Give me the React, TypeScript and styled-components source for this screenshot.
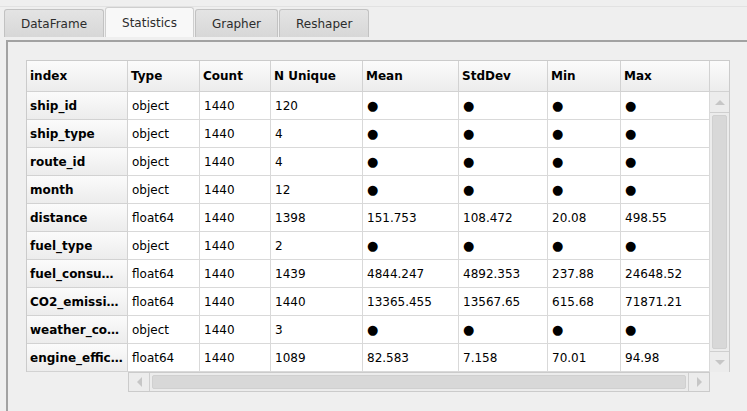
import styled, { createGlobalStyle } from 'styled-components'

const GlobalStyle = createGlobalStyle`
  html, body {
    margin: 0;
    padding: 0;
    background: #efefef;
  }
  * {
    box-sizing: border-box;
  }
`

// ---- Styled Components ----
const Window = styled.div`
  width: 747px;
  height: 411px;
  overflow: hidden;
  background: #efefef;
  font-family: 'DejaVu Sans', 'Liberation Sans', sans-serif;
  font-size: 12px;
  color: #000;
  display: flex;
  flex-direction: column;
`

const TabBar = styled.div`
  display: flex;
  align-items: flex-end;
  gap: 1px;
  height: 32px;
  padding-left: 4px;
  border-top: 1px solid #e2e2e2;
  margin-top: 6px;
`

const Tab = styled.div<{ $active?: boolean }>`
  height: ${({ $active }) => ($active ? '30px' : '28px')};
  padding: 0 16px;
  display: flex;
  align-items: center;
  border: 1px solid ${({ $active }) => ($active ? '#cfcfcf' : '#c2c2c2')};
  border-bottom: none;
  border-radius: 3px 3px 0 0;
  background: ${({ $active }) =>
    $active ? '#f8f8f8' : 'linear-gradient(#e4e4e4, #d7d7d7)'};
  color: #2c2c2c;
  margin-bottom: 1px;
  padding-top: 1px;
`

const Panel = styled.div`
  flex: 1;
  width: 760px;
  margin-left: 6px;
  margin-top: 2px;
  border-top: 2px solid #a2a2a2;
  border-left: 2px solid #a2a2a2;
  padding: 18px 0 0 18px;
  background: #efefef;
`

const Frame = styled.div`
  display: flex;
  width: 704px;
  border: 1px solid #cbcbcb;
  border-bottom: none;
`

const Grid = styled.div`
  display: grid;
  grid-template-columns: 101px 72px 71px 92px 96px 89px 73px 89px;
  grid-auto-rows: 28px;
  grid-template-rows: 31px;
`

const HeadCell = styled.div`
  display: flex;
  align-items: center;
  padding: 0 4px 0 3px;
  font-weight: bold;
  background: linear-gradient(#fbfbfb, #ececec);
  border-right: 1px solid #d2d2d2;
  border-bottom: 1px solid #d2d2d2;
  white-space: nowrap;
  overflow: hidden;
`

const Cell = styled.div`
  display: flex;
  align-items: center;
  padding: 0 4px 0 4px;
  background: #fff;
  border-right: 1px solid #d9d9d9;
  border-bottom: 1px solid #d9d9d9;
  white-space: nowrap;
  overflow: hidden;
`

const Dot = styled.span`
  font-size: 13px;
  line-height: 1;
`

const VScroll = styled.div`
  width: 19px;
  display: flex;
  flex-direction: column;
  background: #ececec;
`

const Corner = styled.div`
  height: 31px;
  background: linear-gradient(#fbfbfb, #ececec);
  border-bottom: 1px solid #d2d2d2;
`

const ArrowButton = styled.div<{ $vertical?: boolean }>`
  flex: 0 0 auto;
  width: ${({ $vertical }) => ($vertical ? '100%' : '20px')};
  height: ${({ $vertical }) => ($vertical ? '20px' : '100%')};
  display: flex;
  align-items: center;
  justify-content: center;
  background: #ececec;
`

const VTrack = styled.div`
  flex: 1;
  padding: 2px 2px;
  border-top: 1px solid #cfcfcf;
  border-bottom: 1px solid #cfcfcf;
  display: flex;
`

const Thumb = styled.div`
  flex: 1;
  background: #d8d8d8;
  border: 1px solid #d0d0d0;
  border-radius: 2px;
`

const HScroll = styled.div`
  margin-left: 102px;
  width: 582px;
  height: 20px;
  display: flex;
  background: #ececec;
  border: 1px solid #cbcbcb;
`

const HTrack = styled.div`
  flex: 1;
  padding: 2px 2px;
  border-left: 1px solid #cfcfcf;
  border-right: 1px solid #cfcfcf;
  display: flex;
`

// ---- Data ----
const HEADERS = ['index', 'Type', 'Count', 'N Unique', 'Mean', 'StdDev', 'Min', 'Max']

const DOT = '●'

const ROWS: string[][] = [
  ['ship_id', 'object', '1440', '120', DOT, DOT, DOT, DOT],
  ['ship_type', 'object', '1440', '4', DOT, DOT, DOT, DOT],
  ['route_id', 'object', '1440', '4', DOT, DOT, DOT, DOT],
  ['month', 'object', '1440', '12', DOT, DOT, DOT, DOT],
  ['distance', 'float64', '1440', '1398', '151.753', '108.472', '20.08', '498.55'],
  ['fuel_type', 'object', '1440', '2', DOT, DOT, DOT, DOT],
  ['fuel_consu…', 'float64', '1440', '1439', '4844.247', '4892.353', '237.88', '24648.52'],
  ['CO2_emissi…', 'float64', '1440', '1440', '13365.455', '13567.65', '615.68', '71871.21'],
  ['weather_co…', 'object', '1440', '3', DOT, DOT, DOT, DOT],
  ['engine_effic…', 'float64', '1440', '1089', '82.583', '7.158', '70.01', '94.98'],
]

const TABS = ['DataFrame', 'Statistics', 'Grapher', 'Reshaper']

const Arrow = ({ dir }: { dir: 'up' | 'down' | 'left' | 'right' }) => {
  const points = {
    up: '0,5 5,0 10,5',
    down: '0,0 10,0 5,5',
    left: '5,0 5,10 0,5',
    right: '0,0 0,10 5,5',
  }[dir]
  const vertical = dir === 'up' || dir === 'down'
  return (
    <svg width={vertical ? 10 : 5} height={vertical ? 5 : 10}>
      <polygon points={points} fill="#c6c6c6" />
    </svg>
  )
}

// ---- Component ----
export default function App() {
  return (
    <>
      <GlobalStyle />
      <Window>
        <TabBar>
          {TABS.map((t) => (
            <Tab key={t} $active={t === 'Statistics'}>
              {t}
            </Tab>
          ))}
        </TabBar>
        <Panel>
          <Frame>
            <Grid>
              {HEADERS.map((h) => (
                <HeadCell key={h}>{h}</HeadCell>
              ))}
              {ROWS.map((row) =>
                row.map((value, i) =>
                  i === 0 ? (
                    <HeadCell key={`${row[0]}-${i}`}>{value}</HeadCell>
                  ) : (
                    <Cell key={`${row[0]}-${i}`}>
                      {value === DOT ? <Dot>{DOT}</Dot> : value}
                    </Cell>
                  )
                )
              )}
            </Grid>
            <VScroll>
              <Corner />
              <ArrowButton $vertical>
                <Arrow dir="up" />
              </ArrowButton>
              <VTrack>
                <Thumb />
              </VTrack>
              <ArrowButton $vertical>
                <Arrow dir="down" />
              </ArrowButton>
            </VScroll>
          </Frame>
          <HScroll>
            <ArrowButton>
              <Arrow dir="left" />
            </ArrowButton>
            <HTrack>
              <Thumb />
            </HTrack>
            <ArrowButton>
              <Arrow dir="right" />
            </ArrowButton>
          </HScroll>
        </Panel>
      </Window>
    </>
  )
}
